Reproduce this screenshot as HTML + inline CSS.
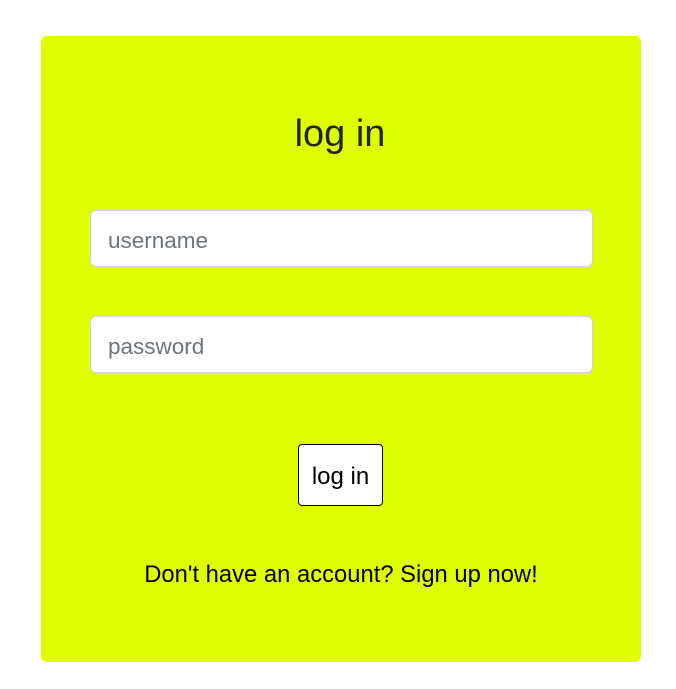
<!DOCTYPE html>
<html><head><style>
body{margin:0;background:#fff;width:676px;height:689px;position:relative;font-family:"Liberation Sans",sans-serif;}
.card{position:absolute;left:41px;top:36px;width:600px;height:626px;background:#dfff00;border-radius:6px;}
h1{position:absolute;left:0;right:0;top:112px;margin:0;text-align:center;font-weight:400;font-size:38px;color:#212529;line-height:44px;padding-left:4px;}
.in{position:absolute;left:90px;width:501px;height:55px;background:#fff;border:1px solid #ced4da;border-radius:6px;color:#6c757d;font-size:22.5px;line-height:60px;}
.in span{position:absolute;left:17px;}
.btn{position:absolute;left:298px;top:444px;width:83px;height:60px;background:#fff;border:1px solid #000;border-radius:4px;text-align:center;line-height:64px;font-size:24px;color:#000;}
.f{position:absolute;left:0;right:0;top:559px;text-align:center;font-size:23.8px;color:#000;line-height:32px;padding-left:6px;}
</style></head><body>
<div class="card"></div>
<h1>log in</h1>
<div class="in" style="top:210px"><span>username</span></div>
<div class="in" style="top:316px"><span>password</span></div>
<div class="btn">log in</div>
<div class="f">Don't have an account? Sign up now!</div>
</body></html>
